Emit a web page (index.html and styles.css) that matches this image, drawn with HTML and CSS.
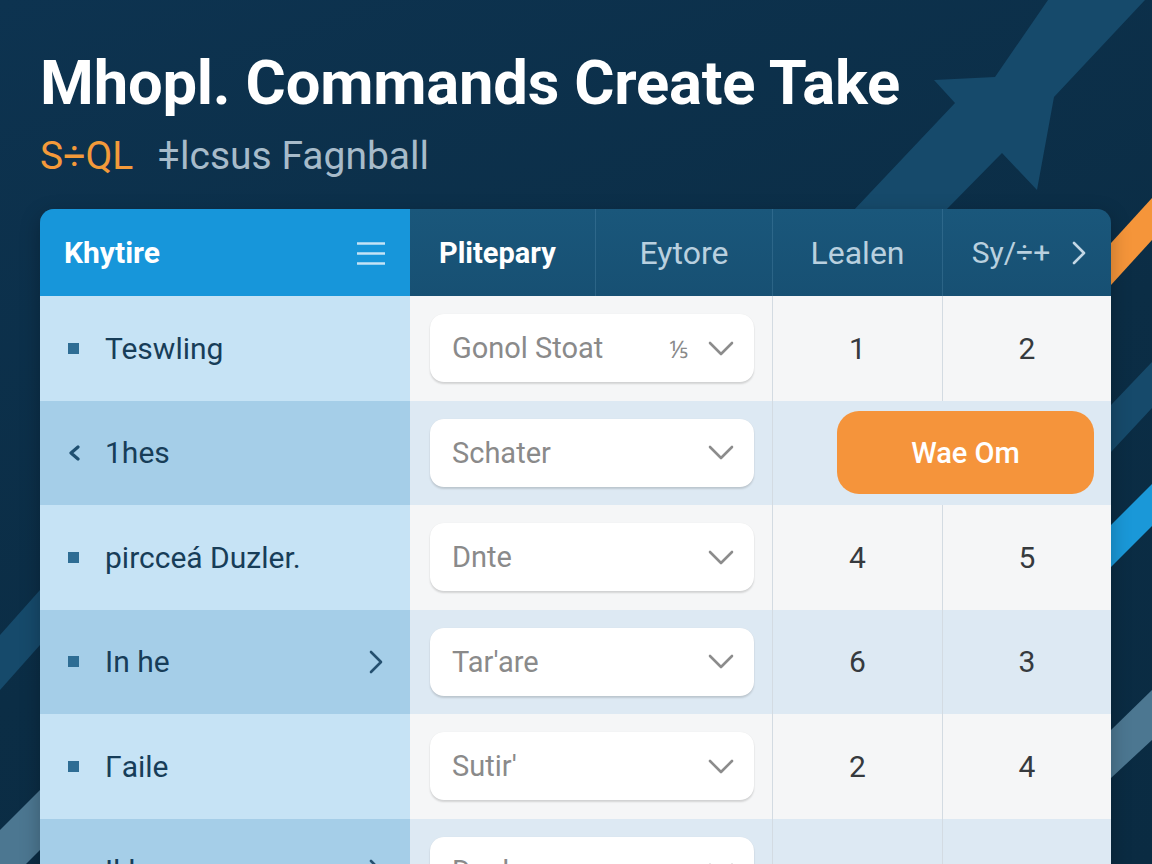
FILE: index.html
```html
<!DOCTYPE html>
<html lang="en">
<head>
<meta charset="utf-8">
<title>Mhopl. Commands Create Take</title>
<link rel="stylesheet" href="styles.css">
</head>
<body>
<div class="page">
  <svg class="bg" width="1152" height="864" viewBox="0 0 1152 864" aria-hidden="true">
    <polygon class="navy" points="852,212 955,103 934,80 995,77 1048,0 1145,0 1054,97 1037,190 1002,153 944,212"/>
    <polygon class="orange" points="1111,243 1152,198 1152,240 1111,285"/>
    <polygon class="navy" points="1111,405 1152,362 1152,408 1111,452"/>
    <polygon class="blue" points="1111,525 1152,484 1152,526 1111,567"/>
    <polygon class="grey" points="1111,730 1152,690 1152,740 1111,778"/>
    <polygon class="navy" points="0,635 40,590 40,645 0,690"/>
    <polygon class="grey" points="0,830 40,790 40,850 0,890"/>
  </svg>

  <header class="hero">
    <h1 class="title">Mhopl. Commands Create Take</h1>
    <p class="subtitle"><span class="accent">S÷QL</span><span class="muted">ǂlcsus Fagnball</span></p>
  </header>

  <section class="card">
    <div class="thead">
      <div class="th th-side">
        <span>Khytire</span>
        <svg class="burger" width="28" height="24" viewBox="0 0 28 24"><path d="M0 2.5H28M0 12.5H28M0 22.5H28"/></svg>
      </div>
      <div class="th th-main">Plitepary</div>
      <div class="th th-col">Eytore</div>
      <div class="th th-col">Lealen</div>
      <div class="th th-col th-last">
        <span>Sy/÷+</span>
        <svg class="head-chev" width="14" height="24" viewBox="0 0 14 24"><polyline points="2,2 12,12 2,22"/></svg>
      </div>
    </div>

    <div class="row odd">
      <div class="side"><span class="bullet"></span><span>Teswling</span></div>
      <div class="pick"><div class="select"><span class="val">Gonol Stoat</span><span class="extra">⅕</span><svg class="down" width="26" height="15" viewBox="0 0 26 15"><polyline points="2,2 13,13 24,2"/></svg></div></div>
      <div class="num">1</div>
      <div class="num">2</div>
    </div>

    <div class="row even">
      <div class="side"><svg class="side-chev" width="12" height="16" viewBox="0 0 12 16"><polyline points="10,2 3,8 10,14"/></svg><span>1hes</span></div>
      <div class="pick"><div class="select"><span class="val">Schater</span><svg class="down" width="26" height="15" viewBox="0 0 26 15"><polyline points="2,2 13,13 24,2"/></svg></div></div>
      <div class="action"><button class="btn" type="button">Wae Om</button></div>
    </div>

    <div class="row odd">
      <div class="side"><span class="bullet"></span><span>pircceá Duzler.</span></div>
      <div class="pick"><div class="select"><span class="val">Dnte</span><svg class="down" width="26" height="15" viewBox="0 0 26 15"><polyline points="2,2 13,13 24,2"/></svg></div></div>
      <div class="num">4</div>
      <div class="num">5</div>
    </div>

    <div class="row even">
      <div class="side"><span class="bullet"></span><span class="grow">In he</span><svg class="side-next" width="14" height="24" viewBox="0 0 14 24"><polyline points="2,2 12,12 2,22"/></svg></div>
      <div class="pick"><div class="select"><span class="val">Tar'are</span><svg class="down" width="26" height="15" viewBox="0 0 26 15"><polyline points="2,2 13,13 24,2"/></svg></div></div>
      <div class="num">6</div>
      <div class="num">3</div>
    </div>

    <div class="row odd">
      <div class="side"><span class="bullet"></span><span>Γaile</span></div>
      <div class="pick"><div class="select"><span class="val">Sutir'</span><svg class="down" width="26" height="15" viewBox="0 0 26 15"><polyline points="2,2 13,13 24,2"/></svg></div></div>
      <div class="num">2</div>
      <div class="num">4</div>
    </div>

    <div class="row even">
      <div class="side"><span class="bullet hidden"></span><span class="grow">Ikle</span><svg class="side-next" width="14" height="24" viewBox="0 0 14 24"><polyline points="2,2 12,12 2,22"/></svg></div>
      <div class="pick"><div class="select"><span class="val">Deal</span><svg class="down" width="26" height="15" viewBox="0 0 26 15"><polyline points="2,2 13,13 24,2"/></svg></div></div>
      <div class="num"></div>
      <div class="num"></div>
    </div>
  </section>
</div>
</body>
</html>
```

FILE: styles.css
```css
* {
  box-sizing: border-box;
  margin: 0;
  padding: 0;
}

html,
body {
  width: 1152px;
  height: 864px;
  overflow: hidden;
}

body {
  background: #0b2d45;
  font-family: Roboto, "Liberation Sans", Arial, sans-serif;
}

.page {
  position: relative;
  width: 1152px;
  height: 864px;
  padding: 52px 0 0 40px;
  overflow: hidden;
  background: linear-gradient(160deg, #0d3350 0%, #0b2d45 55%, #0a2b42 100%);
}

.bg {
  position: absolute;
  left: 0;
  top: 0;
  z-index: 0;
}

.bg .navy { fill: #164a6b; }
.bg .orange { fill: #f5953a; }
.bg .blue { fill: #1a98d8; }
.bg .grey { fill: #4c7791; }

.hero,
.card {
  position: relative;
  z-index: 1;
}

.title {
  font-size: 61.5px;
  line-height: 62px;
  font-weight: 700;
  color: #ffffff;
  letter-spacing: -0.2px;
}

.subtitle {
  margin-top: 23px;
  font-size: 39px;
  line-height: 39px;
  font-weight: 400;
}

.accent {
  color: #f39a3a;
}

.muted {
  color: #a7bbca;
  margin-left: 24px;
}

/* card / table */
.card {
  margin-top: 33px;
  width: 1071px;
  border-radius: 14px 14px 0 0;
  overflow: hidden;
  box-shadow: 0 6px 20px rgba(0, 0, 0, 0.25);
}

.thead {
  display: grid;
  grid-template-columns: 370px 185px 177px 170px 169px;
  height: 87px;
  background: linear-gradient(180deg, #1a577b 0%, #175073 100%);
}

.th {
  display: flex;
  align-items: center;
  font-size: 32px;
  color: #b9d0df;
  border-left: 1px solid rgba(120, 170, 200, 0.22);
}

.th-side {
  justify-content: space-between;
  padding: 0 25px 0 24px;
  background: #1796da;
  color: #ffffff;
  font-size: 30px;
  font-weight: 700;
  border-left: none;
}

.burger path {
  fill: none;
  stroke: #c4e3f6;
  stroke-width: 2.6;
}

.th-main {
  padding-left: 29px;
  color: #ffffff;
  font-size: 29px;
  font-weight: 700;
  border-left: none;
}

.th-col {
  justify-content: center;
}

.th-last {
  gap: 22px;
  padding-left: 4px;
  font-size: 30px;
}

.head-chev polyline {
  fill: none;
  stroke: #c3d7e5;
  stroke-width: 2.6;
  stroke-linecap: round;
  stroke-linejoin: round;
}

.row {
  display: grid;
  grid-template-columns: 370px 362px 170px 169px;
  height: 104.5px;
  font-size: 29px;
}

.side {
  display: flex;
  align-items: center;
  padding: 0 27px 0 28px;
  color: #173d58;
  font-size: 30px;
}

.odd .side { background: #c6e3f5; }
.even .side { background: #a5cee8; }

.odd .pick,
.odd .num { background: #f5f6f7; }
.even .pick,
.even .num,
.even .action { background: #dde9f3; }

.bullet {
  width: 11px;
  height: 11px;
  margin-right: 26px;
  background: #2e6d94;
  flex: none;
}

.bullet.hidden {
  visibility: hidden;
}

.side-chev {
  margin-right: 25px;
  flex: none;
}

.side-chev polyline {
  fill: none;
  stroke: #1f4f70;
  stroke-width: 3.2;
  stroke-linecap: round;
  stroke-linejoin: round;
}

.grow {
  flex: 1;
}

.side-next polyline {
  fill: none;
  stroke: #25506f;
  stroke-width: 2.6;
  stroke-linecap: round;
  stroke-linejoin: round;
}

.pick {
  display: flex;
  align-items: center;
  padding: 0 18px 0 20px;
}

.select {
  display: flex;
  align-items: center;
  width: 324px;
  height: 68px;
  padding: 0 20px 0 22px;
  background: #ffffff;
  border-radius: 14px;
  box-shadow: 0 2px 2px rgba(0, 0, 0, 0.14), 0 0 1px rgba(0, 0, 0, 0.08);
  color: #8a8a8a;
}

.val {
  flex: 1;
}

.extra {
  margin-right: 20px;
  color: #8a8a8a;
  font-size: 24px;
}

.down polyline {
  fill: none;
  stroke: #8c8c8c;
  stroke-width: 2.6;
  stroke-linecap: round;
  stroke-linejoin: round;
}

.num {
  display: flex;
  align-items: center;
  justify-content: center;
  border-left: 1px solid #d3dbe2;
  color: #363a3e;
  font-size: 30px;
}

.action {
  grid-column: span 2;
  display: flex;
  align-items: center;
  justify-content: flex-end;
  padding-right: 17px;
  border-left: 1px solid #d3dbe2;
}

.btn {
  width: 257px;
  height: 83px;
  border: none;
  border-radius: 22px;
  background: #f5943b;
  color: #ffffff;
  font-family: Roboto, "Liberation Sans", Arial, sans-serif;
  font-size: 29px;
  font-weight: 500;
}
```
